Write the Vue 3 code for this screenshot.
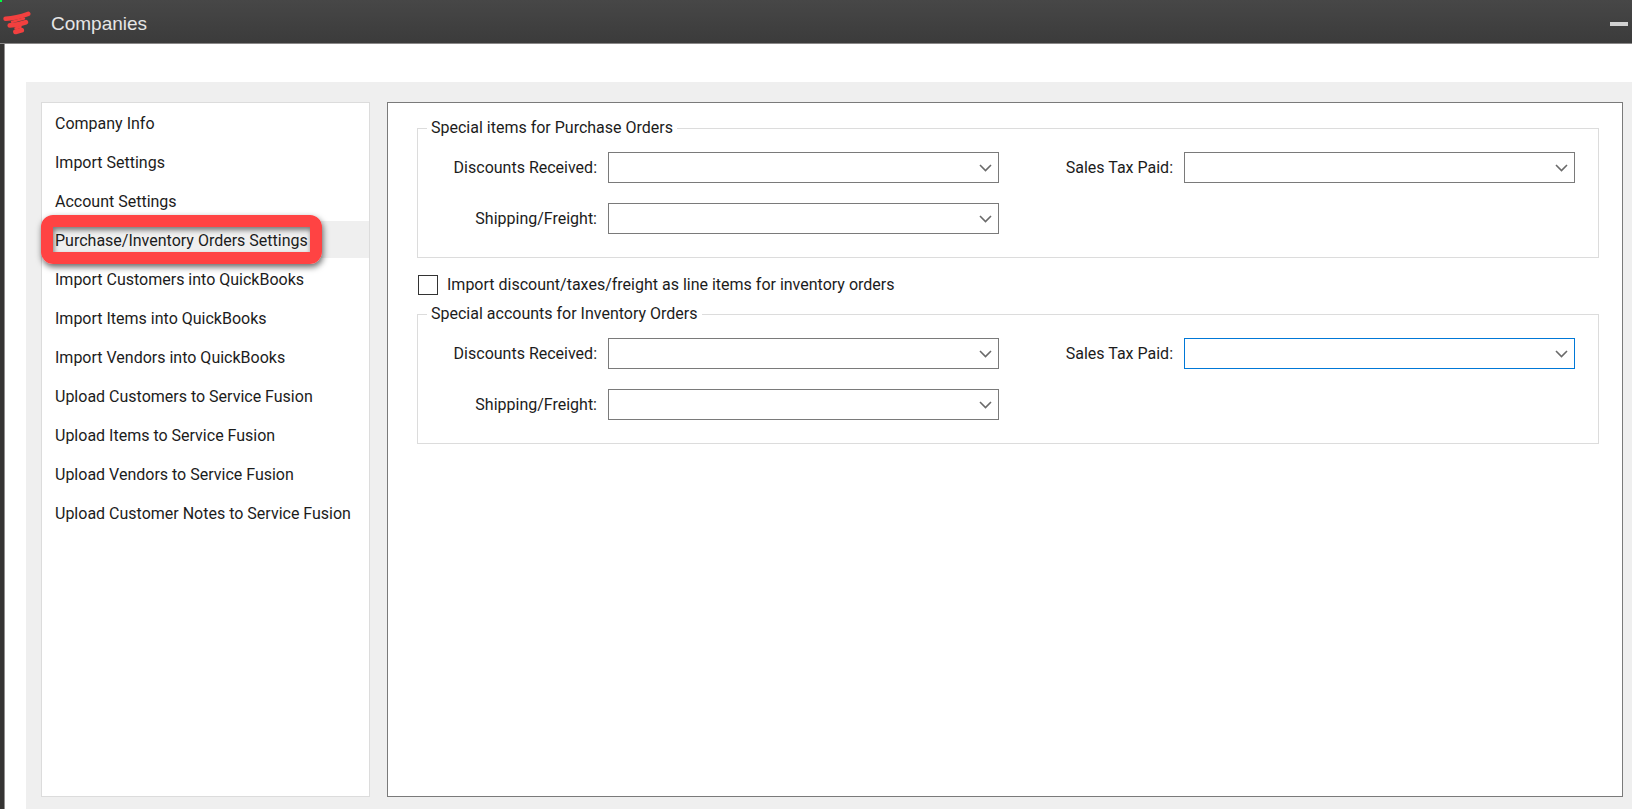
<template>
  <div class="window">
    <header class="titlebar">
      <span class="corner-mark"></span>
      <svg class="logo" viewBox="0 0 28 24" fill="none" stroke="#f2403f" stroke-linecap="round" stroke-linejoin="round">
        <path d="M2.6 7.8 C9 7.4 18 5.4 25.2 2.8" stroke-width="4.6" />
        <path d="M6.8 14.4 C12 14.2 18 13 22.8 11.2" stroke-width="4.8" />
        <path d="M12.6 20.8 L18.6 19.2" stroke-width="5" />
        <path d="M9 10.8 L21 7.6 M12.5 17.4 L17.5 15.8" stroke-width="2.4" />
      </svg>
      <h1 class="title">Companies</h1>
      <button class="minimize" type="button" aria-label="Minimize">
        <span class="minimize-bar"></span>
      </button>
    </header>

    <div class="client">
      <div class="workspace">
        <nav class="sidebar">
          <a
            v-for="item in menu"
            :key="item.id"
            href="#"
            :class="['menu-item', { active: activeItem === item.id }]"
            @click.prevent="activeItem = item.id"
          >
            {{ item.name }}
            <span v-if="item.highlight" class="highlight"></span>
          </a>
        </nav>

        <main class="panel">
          <fieldset class="group">
            <legend>Special items for Purchase Orders</legend>
            <div class="fields">
              <template v-for="field in fields" :key="field.id">
                <label :for="'po-' + field.id">{{ field.label }}</label>
                <div class="combo">
                  <select :id="'po-' + field.id"></select>
                  <svg class="chevron" viewBox="0 0 13 8"><path d="M1 1 L6.5 6.5 L12 1" /></svg>
                </div>
              </template>
            </div>
          </fieldset>

          <div class="check-row">
            <input id="line-items" v-model="asLineItems" type="checkbox" />
            <label for="line-items">Import discount/taxes/freight as line items for inventory orders</label>
          </div>

          <fieldset class="group">
            <legend>Special accounts for Inventory Orders</legend>
            <div class="fields">
              <template v-for="field in fields" :key="field.id">
                <label :for="'inv-' + field.id">{{ field.label }}</label>
                <div class="combo">
                  <select :id="'inv-' + field.id" :class="{ focused: field.id === 'tax' }"></select>
                  <svg class="chevron" viewBox="0 0 13 8"><path d="M1 1 L6.5 6.5 L12 1" /></svg>
                </div>
              </template>
            </div>
          </fieldset>
        </main>
      </div>
    </div>
  </div>
</template>

<script setup>
import { ref } from 'vue'

const activeItem = ref('orders')
const asLineItems = ref(false)

const menu = [
  { id: 'info', name: 'Company Info' },
  { id: 'import', name: 'Import Settings' },
  { id: 'account', name: 'Account Settings' },
  { id: 'orders', name: 'Purchase/Inventory Orders Settings', highlight: true },
  { id: 'import-customers', name: 'Import Customers into QuickBooks' },
  { id: 'import-items', name: 'Import Items into QuickBooks' },
  { id: 'import-vendors', name: 'Import Vendors into QuickBooks' },
  { id: 'upload-customers', name: 'Upload Customers to Service Fusion' },
  { id: 'upload-items', name: 'Upload Items to Service Fusion' },
  { id: 'upload-vendors', name: 'Upload Vendors to Service Fusion' },
  { id: 'upload-notes', name: 'Upload Customer Notes to Service Fusion' }
]

const fields = [
  { id: 'discounts', label: 'Discounts Received:' },
  { id: 'tax', label: 'Sales Tax Paid:' },
  { id: 'shipping', label: 'Shipping/Freight:' }
]
</script>

<style>
body {
  margin: 0;
  background: #fff;
}
</style>

<style scoped>
.window {
  box-sizing: border-box;
  min-height: 100vh;
  display: flex;
  flex-direction: column;
  font-family: Roboto, "Liberation Sans", sans-serif;
  font-size: 16px;
  line-height: 20px;
  color: #1c1c1c;
}

.titlebar {
  position: relative;
  display: flex;
  align-items: center;
  height: 43px;
  padding: 0 4px 0 3px;
  background: linear-gradient(#474747, #3b3b3b);
  border-bottom: 1px solid #8a8888;
}

.corner-mark {
  position: absolute;
  top: 0;
  left: 0;
  width: 2px;
  height: 2px;
  background: #00ff40;
}

.logo {
  width: 28px;
  height: 24px;
  margin-top: 3px;
}

.title {
  flex: 1;
  margin: 0 0 0 20px;
  padding-top: 4px;
  font-family: "Liberation Sans", sans-serif;
  font-size: 19px;
  line-height: 24px;
  font-weight: 400;
  color: #e6e6e6;
}

.minimize {
  display: flex;
  align-items: center;
  justify-content: center;
  height: 24px;
  padding: 0;
  border: none;
  background: none;
}

.minimize-bar {
  width: 18px;
  height: 4px;
  margin-top: 4px;
  background: #d2d2d2;
}

.client {
  flex: 1;
  display: flex;
  padding: 38px 0 0 22px;
  border-left: 4px solid #353433;
  box-shadow: inset 1px 0 #918f8f;
}

.workspace {
  flex: 1;
  display: flex;
  gap: 17px;
  padding: 20px 9px 12px 15px;
  background: #efefef;
}

.sidebar {
  box-sizing: border-box;
  width: 329px;
  border: 1px solid #dcdcdc;
  background: #fff;
}

.menu-item {
  position: relative;
  display: block;
  height: 37px;
  margin: 1px 0;
  padding-left: 13px;
  line-height: 39px;
  color: inherit;
  text-decoration: none;
  white-space: nowrap;
}

.menu-item + .menu-item {
  margin-top: 2px;
}

.menu-item.active {
  background: #efefef;
}

/* red callout drawn over the selected entry */
.highlight {
  position: absolute;
  top: -6px;
  left: -1px;
  box-sizing: border-box;
  width: 281px;
  height: 49px;
  border: 12px solid #ff4343;
  border-radius: 12px;
  box-shadow: 1px 3px 6px rgba(0, 0, 0, 0.6), inset 1px 3px 5px rgba(0, 0, 0, 0.5);
  pointer-events: none;
  z-index: 1;
}

.panel {
  flex: 1;
  padding: 15px 23px 15px 29px;
  border: 1px solid #7a7a7a;
  background: #fff;
}

.group {
  min-width: 0;
  margin: 0;
  padding: 14px 23px 23px 31px;
  border: 1px solid #dcdcdc;
}

.group legend {
  margin-left: -22px;
  padding: 0 4px;
}

.fields {
  display: grid;
  grid-template-columns: 148px 1fr 163px 1fr;
  gap: 20px 11px;
  align-items: center;
}

.fields label {
  text-align: right;
  white-space: nowrap;
}

.combo {
  position: relative;
  height: 31px;
}

.combo select {
  appearance: none;
  display: block;
  width: 100%;
  height: 100%;
  padding: 0 28px 0 6px;
  border: 1px solid #7a7a7a;
  border-radius: 0;
  background: #fff;
  font: inherit;
}

.combo select.focused {
  border-color: #0078d7;
}

.chevron {
  position: absolute;
  top: 12px;
  right: 7px;
  width: 13px;
  height: 8px;
  fill: none;
  stroke: #6a6a6a;
  stroke-width: 1.6;
  pointer-events: none;
}

.check-row {
  display: flex;
  align-items: center;
  gap: 9px;
  margin: 17px 0 9px 1px;
}

.check-row input {
  appearance: none;
  box-sizing: border-box;
  width: 20px;
  height: 20px;
  margin: 0;
  border: 1px solid #333;
  background: #fff;
}

.check-row input:checked {
  background: #333;
  box-shadow: inset 0 0 0 4px #fff;
}
</style>
